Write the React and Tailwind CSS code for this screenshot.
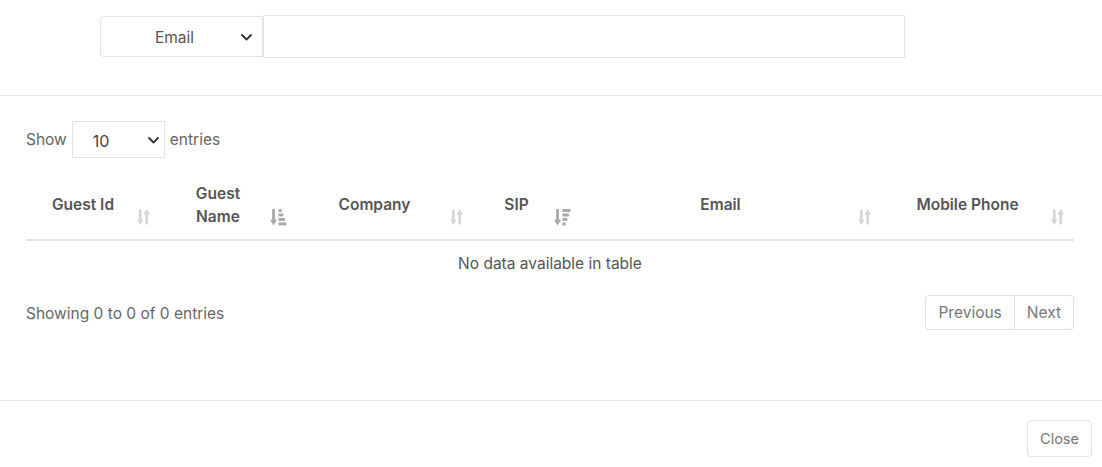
import React from "react";

const COLUMNS = [
  { id: "id", label: ["Guest Id"], width: "w-[134px]", sort: "none" },
  { id: "name", label: ["Guest", "Name"], width: "w-[136px]", sort: "asc" },
  { id: "company", label: ["Company"], width: "w-[177px]", sort: "none" },
  { id: "sip", label: ["SIP"], width: "w-[107px]", sort: "desc" },
  { id: "email", label: ["Email"], width: "w-[301px]", sort: "none" },
  { id: "mobile", label: ["Mobile Phone"], width: "w-[193px]", sort: "none" },
];

function Chevron({ className }) {
  return (
    <svg width="11" height="7" viewBox="0 0 11 7" className={className}>
      <path d="M1 1l4.5 4.5L10 1" fill="none" stroke="#333" strokeWidth="1.8" strokeLinecap="round" strokeLinejoin="round" />
    </svg>
  );
}

function SortIcon({ kind }) {
  if (kind === "asc") {
    return (
      <svg width="17" height="18" viewBox="0 0 16 17" fill="#a8a8a8">
        <rect x="2" y="1" width="2.6" height="11" />
        <path d="M0 11h6.6l-3.3 5.5z" />
        <rect x="8" y="1" width="3" height="2.8" />
        <rect x="8" y="5.2" width="4.5" height="2.8" />
        <rect x="8" y="9.4" width="6" height="2.8" />
        <rect x="8" y="13.6" width="7.5" height="2.8" />
      </svg>
    );
  }
  if (kind === "desc") {
    return (
      <svg width="17" height="18" viewBox="0 0 16 17" fill="#a8a8a8">
        <rect x="2" y="1" width="2.6" height="11" />
        <path d="M0 11h6.6l-3.3 5.5z" />
        <rect x="8" y="1" width="7.5" height="2.8" />
        <rect x="8" y="5.2" width="6" height="2.8" />
        <rect x="8" y="9.4" width="4.5" height="2.8" />
        <rect x="8" y="13.6" width="3" height="2.8" />
      </svg>
    );
  }
  return (
    <svg width="14" height="18" viewBox="0 0 14 17" fill="#d6d6d6">
      <rect x="2" y="1" width="2.6" height="11" />
      <path d="M0 11h6.6l-3.3 5.5z" />
      <rect x="8.4" y="5" width="2.6" height="11" />
      <path d="M6.4 6h6.6l-3.3-5.5z" />
    </svg>
  );
}

export default function App() {
  return (
    <div className="w-[1102px] h-[467px] bg-white text-[#666] font-['Inter','Liberation_Sans',sans-serif] text-[15.5px]">
      {/* Search bar */}
      <div className="h-[96px] border-b border-[#e3e3e3] pt-[15px] pl-[100px]">
        <div className="flex items-center">
          <div className="relative flex h-[41px] w-[163px] items-center justify-center rounded-l-[4px] border border-[#e3e3e3] text-[#555]">
            <span className="pr-[14px] pt-[2px]">Email</span>
            <Chevron className="absolute right-[10px] top-[17px]" />
          </div>
          <div className="h-[43px] w-[642px] border border-[#e3e3e3]" />
        </div>
      </div>

      {/* Table area */}
      <div className="h-[305px] border-b border-[#e3e3e3] pl-[26px] pr-[28px] pt-[25px]">
        <div className="flex items-center gap-[5px] text-[#666]">
          <span>Show</span>
          <div className="relative flex h-[37px] w-[93px] items-center border border-[#e3e3e3] pl-[20px] pt-[3px] text-[#444]">
            <span className="text-[16px]">10</span>
            <Chevron className="absolute right-[5px] top-[15px]" />
          </div>
          <span>entries</span>
        </div>

        <div className="mt-[12px] w-[1048px]">
          <div className="flex h-[71px] border-b-2 border-[#e3e3e3]">
            {COLUMNS.map((col) => (
              <div
                key={col.id}
                className={`relative flex ${col.width} flex-col items-center justify-center pl-[10px] pr-[30px] text-center font-semibold leading-[23px] text-[#555]`}
              >
                {col.label.map((l) => (
                  <span key={l}>{l}</span>
                ))}
                <span className="absolute right-[9px] bottom-[13px] flex">
                  <SortIcon kind={col.sort} />
                </span>
              </div>
            ))}
          </div>
          <div className="flex h-[45px] items-center justify-center text-[#555]">No data available in table</div>
        </div>

        <div className="mt-[9px] flex w-[1048px] items-center justify-between">
          <span className="pt-[3px]">Showing 0 to 0 of 0 entries</span>
          <div className="flex h-[35px] rounded-[4px] border border-[#e0e0e0] text-[#777]">
            <button className="px-[12px] border-r border-[#e0e0e0]">Previous</button>
            <button className="px-[12px]">Next</button>
          </div>
        </div>
      </div>

      {/* Footer */}
      <div className="flex justify-end pr-[10px] pt-[19px]">
        <button className="h-[37px] w-[65px] rounded-[4px] border border-[#e3e3e3] text-[14.5px] text-[#777]">Close</button>
      </div>
    </div>
  );
}
